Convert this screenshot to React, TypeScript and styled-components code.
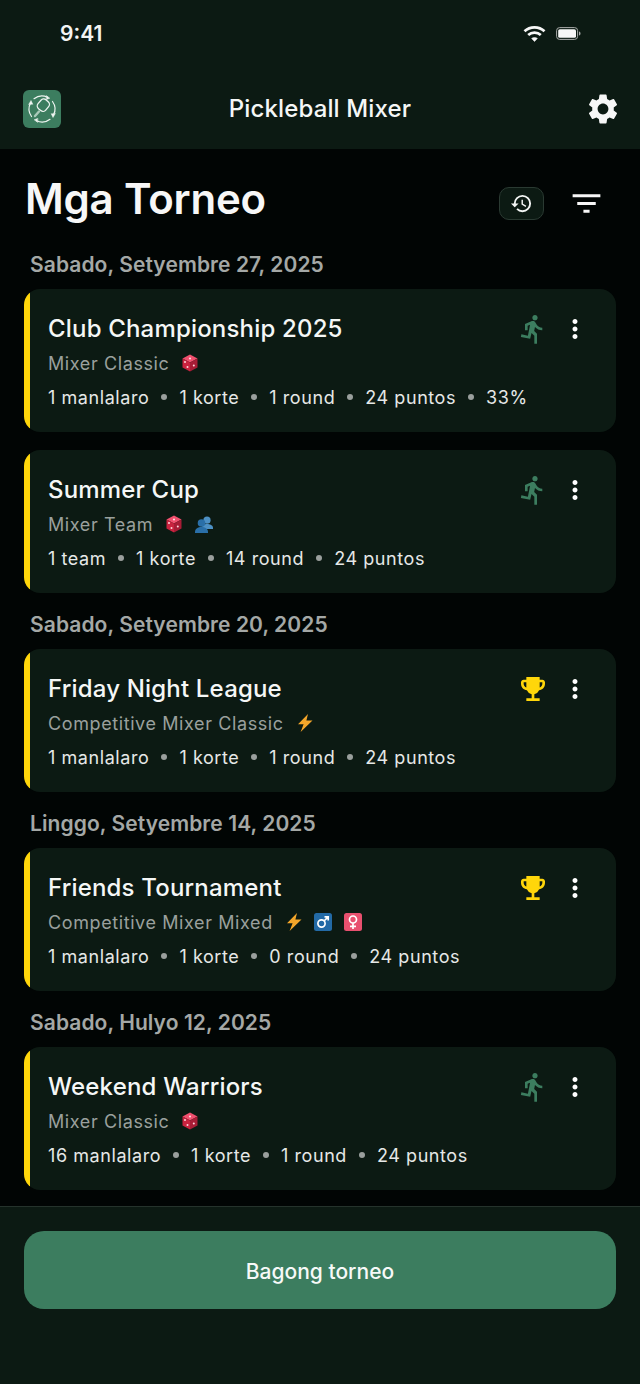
import { Fragment } from "react";
import styled, { createGlobalStyle } from "styled-components";
import { MdDirectionsRun, MdEmojiEvents, MdFilterList, MdHistory, MdMoreVert, MdSettings } from "react-icons/md";

const GlobalStyle = createGlobalStyle`
  html, body {
    margin: 0;
    padding: 0;
    background: #000;
  }
  * {
    box-sizing: border-box;
  }
`;

const Screen = styled.div`
  width: 640px;
  height: 1384px;
  display: flex;
  flex-direction: column;
  overflow: hidden;
  background: #010504;
  color: #fff;
  font-family: Inter, "Liberation Sans", sans-serif;
`;

const TopArea = styled.header`
  height: 149px;
  flex-shrink: 0;
  background: #0c1a13;
  display: flex;
  flex-direction: column;
`;

const StatusBar = styled.div`
  height: 68px;
  padding: 0 59px 2px 60px;
  display: flex;
  align-items: center;
  justify-content: space-between;
`;

const Clock = styled.span`
  font-size: 21px;
  font-weight: 600;
  color: #f2f4f3;
`;

const StatusIcons = styled.div`
  display: flex;
  align-items: center;
  gap: 10px;
`;

const NavBar = styled.div`
  flex: 1;
  padding: 0 19px 0 23px;
  display: flex;
  align-items: center;
`;

const NavSide = styled.div<{ $end?: boolean }>`
  flex: 1;
  display: flex;
  justify-content: ${p => (p.$end ? "flex-end" : "flex-start")};
  color: #f7f7f7;
`;

const LogoTile = styled.div`
  width: 38px;
  height: 38px;
  border-radius: 6px;
  background: #3c7d5f;
  display: flex;
  align-items: center;
  justify-content: center;
`;

const NavTitle = styled.h1`
  margin: 0 4px 0 0;
  font-size: 24px;
  letter-spacing: 0.13px;
  font-weight: 500;
  color: #f5f7f6;
`;

const Main = styled.main`
  flex: 1;
  min-height: 0;
  overflow: hidden;
  padding: 0 24px;
`;

const TitleRow = styled.div`
  height: 100px;
  padding: 0 11px 0 1px;
  display: flex;
  align-items: center;
  justify-content: space-between;
`;

const PageTitle = styled.h2`
  margin: 0 0 2px;
  font-size: 42px;
  font-weight: 600;
  letter-spacing: -0.2px;
  color: #f7f7f7;
`;

const TitleActions = styled.div`
  padding-top: 8px;
  display: flex;
  align-items: center;
  gap: 24px;
`;

const HistoryButton = styled.button`
  width: 45px;
  height: 33px;
  padding: 0;
  border: 1.5px solid #2a3a32;
  border-radius: 10px;
  background: #0c1a13;
  color: #f3f5f4;
  display: flex;
  align-items: center;
  justify-content: center;
`;

const PlainIcon = styled.div`
  display: flex;
  color: #f7f7f7;
`;

const DateSection = styled.section`
  margin-top: 20px;

  &:first-of-type {
    margin-top: 4px;
  }
`;

const DateLabel = styled.div`
  height: 24px;
  margin: 0 0 12px 6px;
  font-size: 21px;
  line-height: 24px;
  font-weight: 600;
  letter-spacing: 0.08px;
  color: #a4a8a6;
`;

const CardList = styled.div`
  display: flex;
  flex-direction: column;
  gap: 18px;
`;

const Card = styled.article`
  position: relative;
  height: 143px;
  padding: 24px 26px 0 24px;
  border-radius: 16px;
  background: #0c1a13;
  overflow: hidden;

  &::before {
    content: "";
    position: absolute;
    left: 0;
    top: 0;
    bottom: 0;
    width: 6px;
    background: #ffd60a;
  }
`;

const CardTop = styled.div`
  display: flex;
  align-items: center;
  justify-content: space-between;
  height: 32px;
`;

const CardTitle = styled.h3`
  margin: 0;
  font-size: 24px;
  line-height: 32px;
  font-weight: 500;
  letter-spacing: 0.18px;
  color: #f5f7f6;
`;

const CardIcons = styled.div`
  display: flex;
  align-items: center;
  gap: 12px;
`;

const StatusIconWrap = styled.div<{ $color: string }>`
  width: 30px;
  display: flex;
  justify-content: center;
  color: ${p => p.$color};

  svg {
    flex-shrink: 0;
  }
`;

const MenuWrap = styled.div`
  display: flex;
  color: #fff;
`;

const ModeRow = styled.div`
  margin-top: 6px;
  height: 24px;
  display: flex;
  align-items: center;
  gap: 13px;
  font-size: 18px;
  letter-spacing: 0.6px;
  color: #9aa09d;
`;

const Badge = styled.span`
  display: flex;

  & + & {
    margin-left: -1px;
  }
`;

const StatsRow = styled.div`
  margin-top: 10px;
  height: 24px;
  display: flex;
  align-items: center;
  gap: 12px;
  font-size: 18px;
  letter-spacing: 0.57px;
  color: #e6e8e7;
`;

const Dot = styled.span`
  width: 6px;
  height: 6px;
  border-radius: 50%;
  background: #9a9f9d;
`;

const Footer = styled.footer`
  height: 178px;
  flex-shrink: 0;
  padding: 24px 24px 0;
  border-top: 1.5px solid #25332c;
  background: #0c1a13;
`;

const NewButton = styled.button`
  width: 100%;
  height: 78px;
  padding: 3px 0 0;
  border: none;
  border-radius: 20px;
  background: #3c7d5f;
  color: #f7f9f8;
  font-family: inherit;
  font-size: 21px;
  font-weight: 500;
`;

const Dice = () => (
  <svg width="16" height="18" viewBox="0 0 16 18">
    <path d="M8 .5 15.5 4.5 8 8.5.5 4.5z" fill="#f0506e" />
    <path d="M.5 4.5 8 8.5V17.5L.5 13.5z" fill="#c9233f" />
    <path d="M15.5 4.5 8 8.5V17.5L15.5 13.5z" fill="#a81c36" />
    <circle cx="8" cy="4.5" r="1.1" fill="#ffd6dc" />
    <circle cx="3" cy="8" r="1" fill="#ffd6dc" />
    <circle cx="5.5" cy="13" r="1" fill="#ffd6dc" />
    <circle cx="11.8" cy="11.5" r="1" fill="#ffd6dc" />
  </svg>
);

const Bolt = () => (
  <svg width="16" height="18" viewBox="0 0 16 18">
    <path d="M11 0 1 10.2h5.6L3.6 18 15.5 6.6H9.4z" fill="#f4a62a" />
  </svg>
);

const Busts = () => (
  <svg width="20" height="17" viewBox="0 0 20 17">
    <circle cx="13" cy="4.2" r="3.6" fill="#4d90c4" />
    <path d="M8 12c0-3 2.2-4 5-4s6 1 6 4v1H8z" fill="#4d90c4" />
    <circle cx="7.5" cy="7" r="3.8" fill="#2a6fa8" />
    <path d="M1 16c0-3.4 3-5 6.5-5s6.500 1.600 6.500 5v1H1z" fill="#2a6fa8" />
  </svg>
);

const GenderSquare = ({ kind }: { kind: "male" | "female" }) => (
  <svg width="18" height="18" viewBox="0 0 18 18">
    <rect width="18" height="18" rx="2.500" fill={kind === "male" ? "#236aa6" : "#e8506f"} />
    {kind === "male" ? (
      <g fill="none" stroke="#fff" strokeWidth="1.700">
        <circle cx="7.500" cy="10.500" r="3.600" />
        <path d="M10 8 14.200 3.800M10.500 3.800H14.200V7.500" />
      </g>
    ) : (
      <g fill="none" stroke="#fff" strokeWidth="1.700">
        <circle cx="9" cy="6.500" r="3.500" />
        <path d="M9 10V16M6 13.300H12" />
      </g>
    )}
  </svg>
);

const PaddleLogo = () => (
  <svg width="32" height="32" viewBox="0 0 32 32" fill="none" stroke="#eef5f1" strokeWidth="1.200" strokeLinecap="round">
    <path d="M8 5.700A13 13 0 0 1 21.500 4.200" />
    <path d="M26.500 8.500A13 13 0 0 1 27.500 22" />
    <path d="M24 26.300A13 13 0 0 1 10.500 27.800" />
    <path d="M5.500 23.500A13 13 0 0 1 4.500 10" />
    <path d="M20.500 2.800 23.800 5.200 20.500 6.500z" fill="#eef5f1" strokeWidth="0.500" />
    <path d="M29.200 20.800 27 24.500 25.300 21z" fill="#eef5f1" strokeWidth="0.500" />
    <path d="M11.500 29.200 8.200 26.800 11.500 25.500z" fill="#eef5f1" strokeWidth="0.500" />
    <path d="M2.800 11.200 5 7.500 6.700 11z" fill="#eef5f1" strokeWidth="0.500" />
    <rect x="12.500" y="6.500" width="10" height="11.500" rx="3.500" transform="rotate(40 17.500 12)" strokeWidth="1.300" />
    <path d="M13 18.500 9 23" strokeWidth="2.400" stroke="#a9c9b9" />
  </svg>
);

const WifiIcon = () => (
  <svg width="23" height="17" viewBox="0 0 23 17" fill="none" stroke="#f7f7f7" strokeWidth="2.700">
    <path d="M1.500 6.200C7 1 16 1 21.500 6.200" />
    <path d="M5.200 10C8.700 6.800 14.300 6.800 17.800 10" />
    <path d="M11.500 16.500 8.600 13.400C10.200 12.200 12.800 12.200 14.400 13.400z" fill="#f7f7f7" strokeWidth="0.500" />
  </svg>
);

const BatteryIcon = () => (
  <svg width="25" height="13" viewBox="0 0 25 13">
    <rect x="0.600" y="0.600" width="21" height="11.800" rx="3" fill="none" stroke="#a8aba9" strokeWidth="1" />
    <rect x="2.200" y="2.200" width="17.800" height="8.600" rx="1.600" fill="#f7f7f7" />
    <path d="M23 4.500c1 .3 1.500 1 1.500 2s-.5 1.700-1.500 2z" fill="#a8aba9" />
  </svg>
);

type Status = "running" | "done";
type ModeBadge = "dice" | "bolt" | "busts" | "male" | "female";

interface Tournament {
  title: string;
  mode: string;
  badges: ModeBadge[];
  stats: string[];
  status: Status;
}

interface Section {
  date: string;
  items: Tournament[];
}

const SECTIONS: Section[] = [
  {
    date: "Sabado, Setyembre 27, 2025",
    items: [
      {
        title: "Club Championship 2025",
        mode: "Mixer Classic",
        badges: ["dice"],
        stats: ["1 manlalaro", "1 korte", "1 round", "24 puntos", "33%"],
        status: "running",
      },
      {
        title: "Summer Cup",
        mode: "Mixer Team",
        badges: ["dice", "busts"],
        stats: ["1 team", "1 korte", "14 round", "24 puntos"],
        status: "running",
      },
    ],
  },
  {
    date: "Sabado, Setyembre 20, 2025",
    items: [
      {
        title: "Friday Night League",
        mode: "Competitive Mixer Classic",
        badges: ["bolt"],
        stats: ["1 manlalaro", "1 korte", "1 round", "24 puntos"],
        status: "done",
      },
    ],
  },
  {
    date: "Linggo, Setyembre 14, 2025",
    items: [
      {
        title: "Friends Tournament",
        mode: "Competitive Mixer Mixed",
        badges: ["bolt", "male", "female"],
        stats: ["1 manlalaro", "1 korte", "0 round", "24 puntos"],
        status: "done",
      },
    ],
  },
  {
    date: "Sabado, Hulyo 12, 2025",
    items: [
      {
        title: "Weekend Warriors",
        mode: "Mixer Classic",
        badges: ["dice"],
        stats: ["16 manlalaro", "1 korte", "1 round", "24 puntos"],
        status: "running",
      },
    ],
  },
];

const renderBadge = (badge: ModeBadge) => {
  if (badge === "dice") return <Dice />;
  if (badge === "bolt") return <Bolt />;
  if (badge === "busts") return <Busts />;
  return <GenderSquare kind={badge} />;
};

function TournamentCard({ item }: { item: Tournament }) {
  return (
    <Card>
      <CardTop>
        <CardTitle>{item.title}</CardTitle>
        <CardIcons>
          {item.status === "running" ? (
            <StatusIconWrap $color="#3c7d5f">
              <MdDirectionsRun size={32} />
            </StatusIconWrap>
          ) : (
            <StatusIconWrap $color="#ffd60a">
              <MdEmojiEvents size={32} />
            </StatusIconWrap>
          )}
          <MenuWrap>
            <MdMoreVert size={30} />
          </MenuWrap>
        </CardIcons>
      </CardTop>
      <ModeRow>
        <span>{item.mode}</span>
        {item.badges.map((badge, index) => (
          <Badge key={index}>{renderBadge(badge)}</Badge>
        ))}
      </ModeRow>
      <StatsRow>
        {item.stats.map((stat, index) => (
          <Fragment key={stat}>
            {index > 0 && <Dot />}
            <span>{stat}</span>
          </Fragment>
        ))}
      </StatsRow>
    </Card>
  );
}

export default function App() {
  return (
    <Screen>
      <GlobalStyle />
      <TopArea>
        <StatusBar>
          <Clock>9:41</Clock>
          <StatusIcons>
            <WifiIcon />
            <BatteryIcon />
          </StatusIcons>
        </StatusBar>
        <NavBar>
          <NavSide>
            <LogoTile>
              <PaddleLogo />
            </LogoTile>
          </NavSide>
          <NavTitle>Pickleball Mixer</NavTitle>
          <NavSide $end>
            <MdSettings size={36} />
          </NavSide>
        </NavBar>
      </TopArea>
      <Main>
        <TitleRow>
          <PageTitle>Mga Torneo</PageTitle>
          <TitleActions>
            <HistoryButton>
              <MdHistory size={23} />
            </HistoryButton>
            <PlainIcon>
              <MdFilterList size={37} />
            </PlainIcon>
          </TitleActions>
        </TitleRow>
        {SECTIONS.map(section => (
          <DateSection key={section.date}>
            <DateLabel>{section.date}</DateLabel>
            <CardList>
              {section.items.map(item => (
                <TournamentCard key={item.title} item={item} />
              ))}
            </CardList>
          </DateSection>
        ))}
      </Main>
      <Footer>
        <NewButton>Bagong torneo</NewButton>
      </Footer>
    </Screen>
  );
}
